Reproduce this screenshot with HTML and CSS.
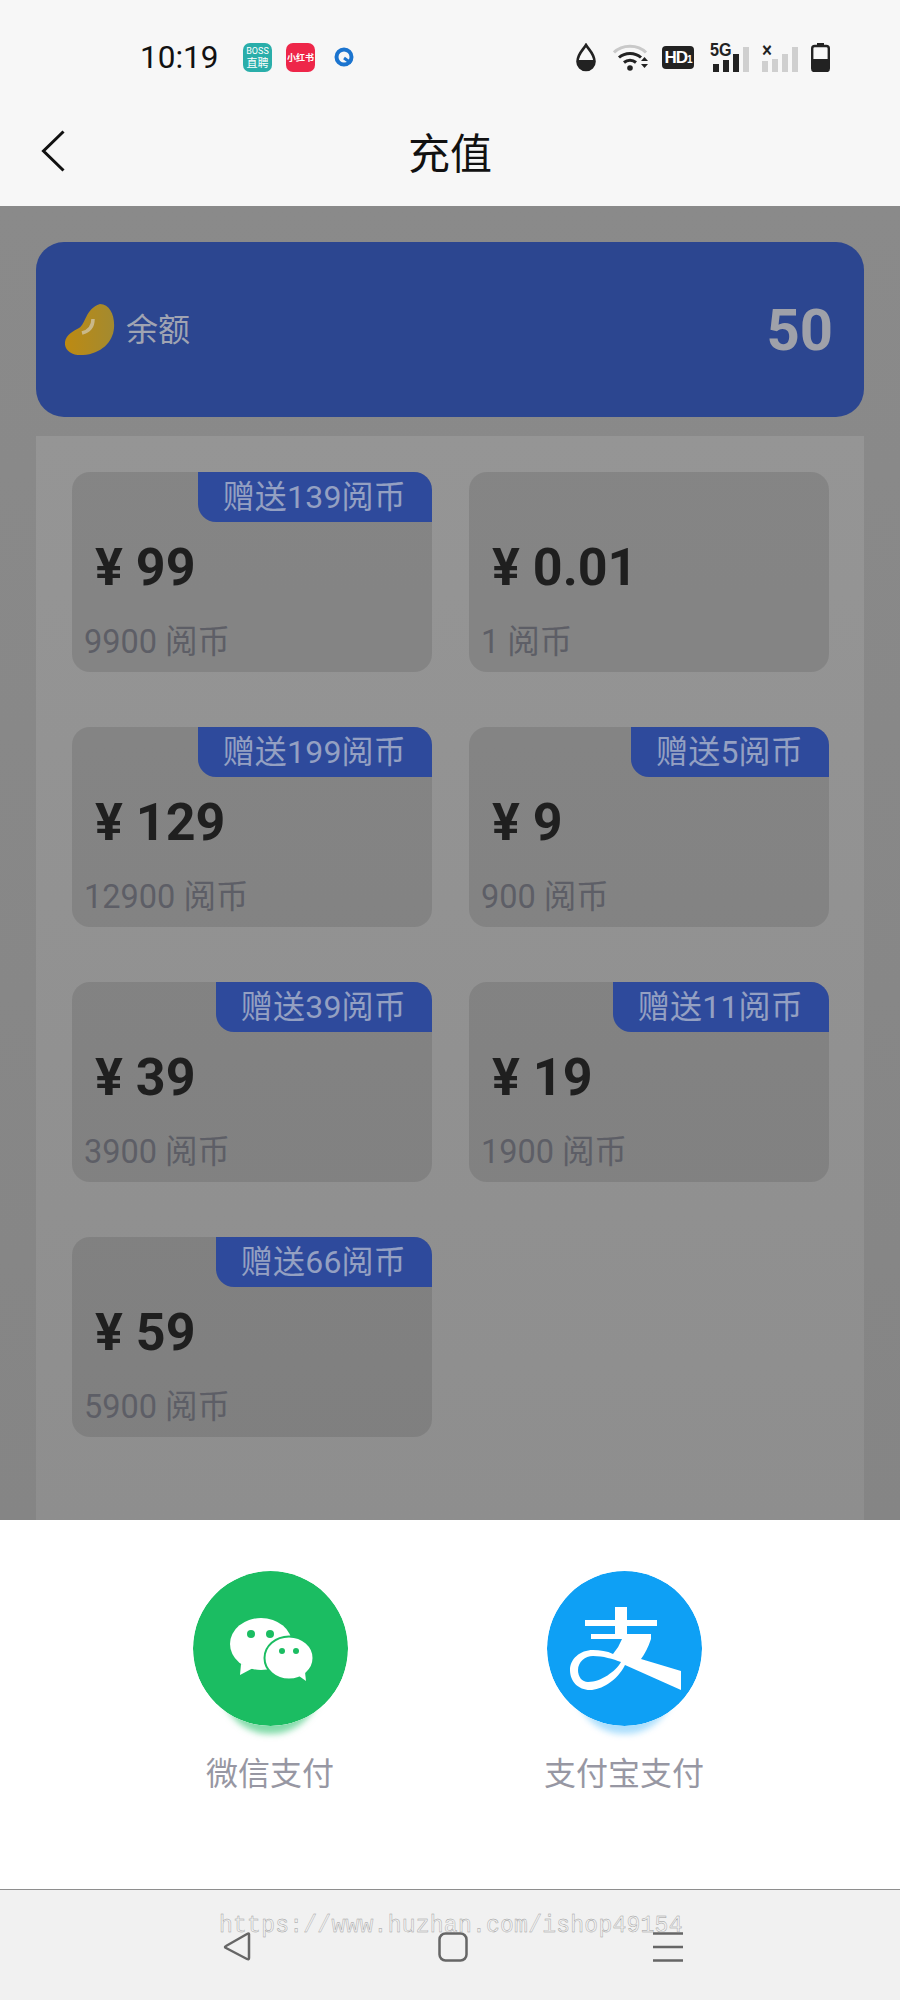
FILE: index.html
```html
<!DOCTYPE html>
<html lang="zh-CN">

<head>
    <meta charset="UTF-8">
    <meta name="viewport" content="width=device-width, initial-scale=1.0">
    <title>充值</title>
    <link rel="stylesheet" href="styles.css">
</head>

<body>
    <header class="top">
        <div class="status">
            <div class="status-left">
                <span class="time">10:19</span>
                <span class="app app-boss"><b>BOSS</b><i>直聘</i></span>
                <span class="app app-red">小红书</span>
                <svg class="app-q" width="30" height="30" viewBox="0 0 30 30">
                    <circle cx="15" cy="15" r="7.500" fill="none" stroke="#1b74cf" stroke-width="4"/>
                    <path d="M15 16l7 5" stroke="#1b74cf" stroke-width="3" fill="none"/>
                </svg>
            </div>
            <div class="status-right">
                <svg class="icon-drop" width="20" height="29" viewBox="0 0 20 29">
                    <path d="M10 2C7 7 1.500 11 1.500 18.500a8.500 8.500 0 0 0 17 0C18.500 11 13 7 10 2z" fill="none" stroke="#222" stroke-width="2.600"/>
                    <path d="M1.500 17h17v2a8.500 8.500 0 0 1-17 0z" fill="#222"/>
                </svg>
                <svg width="36" height="28" viewBox="0 0 36 28">
                    <path d="M1 9.500C9 1 25 1 33 9.500" fill="none" stroke="#c9c9c9" stroke-width="3"/>
                    <path d="M6 14.500C12 9 22 9 28 14.500" fill="none" stroke="#222" stroke-width="3"/>
                    <path d="M11 19.500C14.500 16.500 19.500 16.500 23 19.500" fill="none" stroke="#222" stroke-width="3"/>
                    <circle cx="17" cy="25" r="2.800" fill="#222"/>
                    <path d="M28 18l3.500-4 3.500 4zM28 21l3.500 4 3.500-4z" fill="#222"/>
                </svg>
                <span class="hd">HD<small>1</small></span>
                <span class="signal">
                    <em class="signal-label">5G</em>
                    <i class="bar bar-1"></i><i class="bar bar-2"></i><i class="bar bar-3"></i><i class="bar bar-4 off"></i>
                </span>
                <span class="signal signal-none">
                    <em class="signal-x">×</em>
                    <i class="bar bar-1 off"></i><i class="bar bar-2 off"></i><i class="bar bar-3 off"></i><i class="bar bar-4 off"></i>
                </span>
                <svg width="19" height="29" viewBox="0 0 19 29">
                    <path d="M6 0h7v2H6z" fill="#222"/>
                    <rect x="1.200" y="3" width="16.600" height="25" rx="2.500" fill="none" stroke="#222" stroke-width="2.400"/>
                    <path d="M1 16h17v10a3 3 0 0 1-3 3H4a3 3 0 0 1-3-3z" fill="#222"/>
                </svg>
            </div>
        </div>
        <div class="titlebar">
            <svg class="back" width="24" height="42" viewBox="0 0 24 42">
                <path d="M22.500 1.500L2.500 21l20 19.500" fill="none" stroke="#111" stroke-width="3"/>
            </svg>
            <h1>充值</h1>
        </div>
    </header>

    <main class="content">
        <section class="balance">
            <div class="balance-left">
                <svg width="50" height="52" viewBox="0 0 50 52">
                    <defs>
                        <linearGradient id="bean" x1="0" y1="0" x2="1" y2="0">
                            <stop offset="0" stop-color="#bd8a12"/>
                            <stop offset="1" stop-color="#a38a30"/>
                        </linearGradient>
                    </defs>
                    <path d="M35 0C45 0 50 12 49 24 48 38 36 50 18 51 7 52-1 46 0 38 1 31 8 27 14 24 21 20 20 5 35 0z" fill="url(#bean)"/>
                    <path d="M28 15C28 22 25 27 17 29" fill="none" stroke="#c9b88a" stroke-width="3.500"/>
                </svg>
                <span class="balance-label">余额</span>
            </div>
            <strong>50</strong>
        </section>

        <section class="panel">
            <div class="card-grid">
                <div class="card">
                    <span class="tag">赠送139阅币</span>
                    <div class="price">¥ 99</div>
                    <div class="amount">9900 阅币</div>
                </div>
                <div class="card">
                    <div class="price">¥ 0.01</div>
                    <div class="amount">1 阅币</div>
                </div>
                <div class="card">
                    <span class="tag">赠送199阅币</span>
                    <div class="price">¥ 129</div>
                    <div class="amount">12900 阅币</div>
                </div>
                <div class="card">
                    <span class="tag">赠送5阅币</span>
                    <div class="price">¥ 9</div>
                    <div class="amount">900 阅币</div>
                </div>
                <div class="card">
                    <span class="tag">赠送39阅币</span>
                    <div class="price">¥ 39</div>
                    <div class="amount">3900 阅币</div>
                </div>
                <div class="card">
                    <span class="tag">赠送11阅币</span>
                    <div class="price">¥ 19</div>
                    <div class="amount">1900 阅币</div>
                </div>
                <div class="card">
                    <span class="tag">赠送66阅币</span>
                    <div class="price">¥ 59</div>
                    <div class="amount">5900 阅币</div>
                </div>
            </div>
        </section>
    </main>

    <section class="sheet">
        <div class="pay">
            <svg class="pay-icon pay-wechat" width="155" height="155" viewBox="0 0 155 155">
                <circle cx="77.500" cy="77.500" r="77.500" fill="#1bbd62"/>
                <ellipse cx="68" cy="73" rx="31" ry="26" fill="#fff"/>
                <path d="M48 93l-1 11 15-8z" fill="#fff"/>
                <ellipse cx="96" cy="87" rx="24.500" ry="21.500" fill="#fff" stroke="#1bbd62" stroke-width="2"/>
                <path d="M106 105l7 5-1-9z" fill="#fff"/>
                <circle cx="58" cy="63" r="4" fill="#1bbd62"/>
                <circle cx="77" cy="63" r="4" fill="#1bbd62"/>
                <circle cx="89" cy="80" r="3" fill="#1bbd62"/>
                <circle cx="103" cy="80" r="3" fill="#1bbd62"/>
            </svg>
            <span>微信支付</span>
        </div>
        <div class="pay">
            <svg class="pay-icon pay-alipay" width="155" height="155" viewBox="0 0 155 155">
                <circle cx="77.500" cy="77.500" r="77.500" fill="#0ea0f5"/>
                <path d="M68 36h12v13h30v6H80v8h24v5q-4 12-10 20l40 12v19L78 94C70 110 54 119 43 119 31 119 23 110 23 99 23 88 33 79 46 79c7 0 14 1 20 4q6-7 9-15H44v-5h24v-8H38v-6h30z" fill="#fff"/>
                <path d="M31 99c0-8 7-14 15-14 10 0 20 3 28 6-5 9-20 20-33 20-6 0-10-5-10-12z" fill="#0ea0f5"/>
            </svg>
            <span>支付宝支付</span>
        </div>
    </section>

    <nav class="navbar">
        <svg width="30" height="30" viewBox="0 0 30 30">
            <path d="M26 2v24q0 2-2 1L3 16q-2-1 0-2L24 2q2-1 2 0z" fill="none" stroke="#666" stroke-width="2.500"/>
        </svg>
        <svg width="30" height="30" viewBox="0 0 30 30">
            <rect x="1.500" y="1.500" width="27" height="27" rx="6" fill="none" stroke="#666" stroke-width="2.500"/>
        </svg>
        <svg width="30" height="30" viewBox="0 0 30 30">
            <path d="M0 1.500h30M0 15h30M0 28.500h30" stroke="#666" stroke-width="2.500"/>
        </svg>
        <span class="watermark">https://www.huzhan.com/ishop49154</span>
    </nav>
</body>

</html>
```

FILE: styles.css
```css
* {
    box-sizing: border-box;
}

body {
    margin: 0;
    height: 100vh;
    display: flex;
    flex-direction: column;
    font-family: "Noto Sans CJK SC", Roboto, sans-serif;
    background-color: #888;
}

.top {
    height: 206px;
    background-color: #f7f7f7;
}

.status {
    height: 100px;
    padding: 14px 70px 0 140px;
    display: flex;
    justify-content: space-between;
    align-items: center;
}

.status-left,
.status-right {
    display: flex;
    align-items: center;
}

.time {
    width: 103px;
    font-family: Roboto, sans-serif;
    font-size: 31.500px;
    color: #111;
}

.app {
    width: 29px;
    height: 29px;
    border-radius: 7px;
    margin-right: 14px;
    color: #fff;
    display: flex;
    flex-direction: column;
    align-items: center;
    justify-content: center;
    line-height: 1;
}

.app-boss {
    background-color: #2aaeaa;
}

.app-boss b {
    font-family: Roboto, sans-serif;
    font-weight: 400;
    font-size: 9px;
}

.app-boss i {
    font-style: normal;
    font-size: 11px;
    margin-top: 1px;
}

.app-red {
    background-color: #ee2649;
    font-size: 9px;
    font-weight: 700;
    white-space: nowrap;
}

.status-right {
    gap: 13px;
}

.icon-drop {
    margin-right: 4px;
}

.hd {
    width: 32px;
    height: 23px;
    margin-right: 6px;
    border-radius: 4px;
    background-color: #222;
    color: #fff;
    font-family: "Liberation Sans", sans-serif;
    font-weight: 700;
    font-size: 17px;
    letter-spacing: -1px;
    line-height: 23px;
    text-align: center;
}

.hd small {
    font-size: 10px;
}

.signal {
    position: relative;
    height: 29px;
    width: 36px;
    display: flex;
    align-items: flex-end;
    gap: 4px;
}

.signal-label,
.signal-x {
    position: absolute;
    left: -3px;
    top: -3px;
    font-style: normal;
    font-family: "Liberation Sans", sans-serif;
    font-weight: 700;
    font-size: 19px;
    line-height: 20px;
    color: #222;
    transform: scaleX(0.85);
    transform-origin: left;
}

.signal-x {
    left: 0;
    font-size: 20px;
}

.bar {
    width: 6px;
    background-color: #222;
}

.bar.off {
    background-color: #cfcfcf;
}

.bar-1 {
    height: 8px;
}

.bar-2 {
    height: 12px;
}

.bar-3 {
    height: 18px;
}

.bar-4 {
    height: 25px;
}

.signal-none .bar-1 {
    height: 11px;
}

.signal-none .bar-2 {
    height: 13px;
}

.titlebar {
    position: relative;
    height: 100px;
    display: flex;
    align-items: center;
    justify-content: center;
}

.back {
    position: absolute;
    left: 41px;
    top: 30px;
}

.titlebar h1 {
    margin: 0;
    font-size: 42px;
    font-weight: 400;
    color: #111;
}

.content {
    flex: 1;
    padding: 36px 36px 0;
    display: flex;
    flex-direction: column;
    gap: 19px;
    background: linear-gradient(#8a8a8a, #858585);
}

.balance {
    height: 175px;
    flex: none;
    padding: 0 31px 0 29px;
    border-radius: 28px;
    background-color: #2c4690;
    display: flex;
    justify-content: space-between;
    align-items: center;
}

.balance-left {
    display: flex;
    align-items: center;
    gap: 11px;
    font-size: 32px;
    color: #a0a4b2;
}

.balance-label {
    margin-top: -6px;
}

.balance strong {
    font-family: Roboto, sans-serif;
    font-size: 58px;
    font-weight: 700;
    color: #9fa1a9;
}

.panel {
    flex: 1;
    padding: 36px;
    background: linear-gradient(#959595, #8e8e8e);
}

.card-grid {
    display: grid;
    grid-template-columns: 360px 360px;
    column-gap: 37px;
    row-gap: 55px;
}

.card {
    position: relative;
    height: 200px;
    padding: 66px 12px 0;
    border-radius: 18px;
    background-color: rgba(0, 0, 0, 0.1);
}

.tag {
    position: absolute;
    top: 0;
    right: 0;
    height: 50px;
    padding: 0 26px 0 25px;
    border-radius: 0 18px 0 18px;
    background-color: #2e4a9c;
    color: #94a0c2;
    font-family: Roboto, "Noto Sans CJK SC", sans-serif;
    font-size: 32px;
    letter-spacing: 0.2px;
    line-height: 50px;
}

.price {
    padding-left: 11px;
    font-family: Roboto, sans-serif;
    font-size: 52px;
    font-weight: 700;
    line-height: 60px;
    color: #1f1f1f;
}

.amount {
    margin-top: 24px;
    font-family: Roboto, "Noto Sans CJK SC", sans-serif;
    font-size: 32.500px;
    line-height: 40px;
    color: #5d5e66;
}

.sheet {
    height: 369px;
    flex: none;
    padding: 51px 0 0 93px;
    background-color: #fff;
    display: grid;
    grid-template-columns: 354px 354px;
    align-items: start;
}

.pay {
    display: flex;
    flex-direction: column;
    align-items: center;
    gap: 21px;
    font-size: 32px;
    line-height: 48px;
    color: #9797a3;
}

.pay-icon {
    border-radius: 50%;
}

.pay-wechat {
    box-shadow: 0 35px 6px -27px rgba(27, 189, 98, 0.55);
}

.pay-alipay {
    box-shadow: 0 35px 6px -27px rgba(14, 160, 245, 0.35);
}

.navbar {
    position: relative;
    height: 111px;
    flex: none;
    padding: 42px 217px 0 223px;
    border-top: 1px solid #8e8e8e;
    background-color: #f1f1f1;
    display: flex;
    justify-content: space-between;
    align-items: flex-start;
}

.watermark {
    position: absolute;
    left: 219px;
    top: 21px;
    font-family: "Liberation Mono", monospace;
    font-size: 23px;
    letter-spacing: 0.25px;
    line-height: 30px;
    color: transparent;
    -webkit-text-stroke: 0.4px #999;
    white-space: nowrap;
}
```
